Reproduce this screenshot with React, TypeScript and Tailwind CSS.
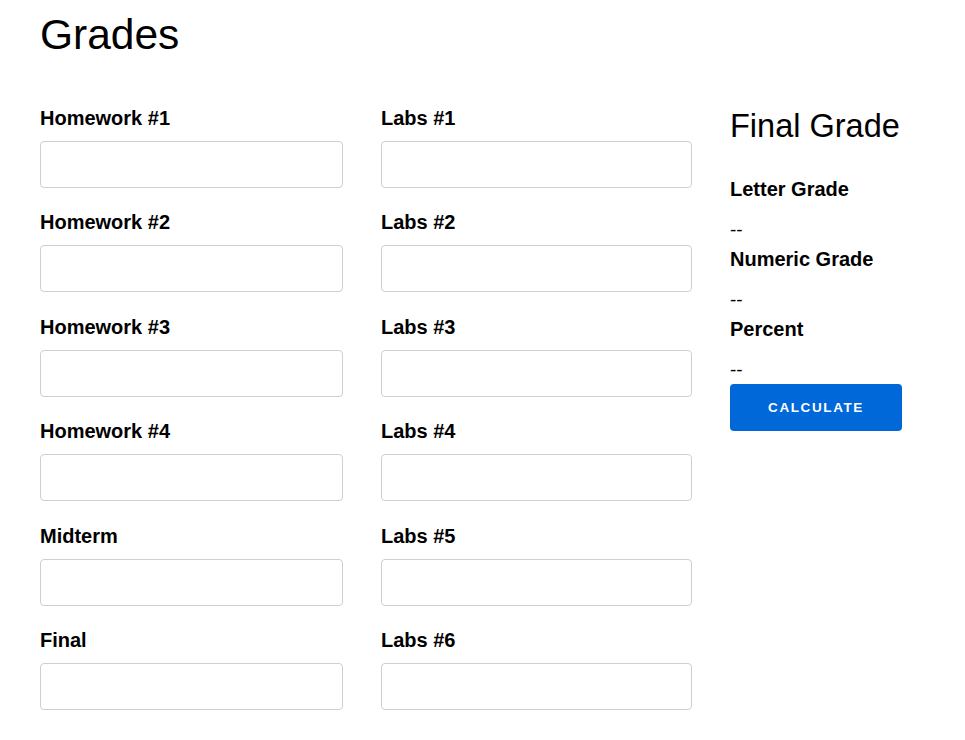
import React from 'react';

const leftFields = ['Homework #1', 'Homework #2', 'Homework #3', 'Homework #4', 'Midterm', 'Final'];
const rightFields = ['Labs #1', 'Labs #2', 'Labs #3', 'Labs #4', 'Labs #5', 'Labs #6'];

function Field({ label }: { label: string }) {
  return (
    <div className="mb-[22.4px]">
      <label className="block text-[20px] leading-[24px] font-bold text-black mb-[11px]">{label}</label>
      <input
        type="text"
        className="block w-full h-[47px] rounded-[4px] border border-[#cfcfcf] bg-white px-3 outline-none"
      />
    </div>
  );
}

export default function App() {
  const results = ['Letter Grade', 'Numeric Grade', 'Percent'];

  return (
    <div
      className="min-h-screen bg-white text-black px-[40px] pt-[10px]"
      style={{ fontFamily: '"Liberation Sans", Arial, sans-serif' }}
    >
      <h1 className="text-[42.5px] leading-[50px] font-normal">Grades</h1>

      <div className="grid grid-cols-[303px_311px_1fr] gap-x-[38px] mt-[46px]">
        {/* Homework column */}
        <div>
          {leftFields.map((f) => (
            <Field key={f} label={f} />
          ))}
        </div>

        {/* Labs column */}
        <div>
          {rightFields.map((f) => (
            <Field key={f} label={f} />
          ))}
        </div>

        {/* Final grade panel */}
        <div>
          <h2 className="text-[32.5px] leading-[40px] font-normal">Final Grade</h2>
          <div className="mt-[31px]">
            {results.map((r, i) => (
              <div key={r} className={i > 0 ? 'mt-[4px]' : ''}>
                <div className="text-[20px] leading-[24px] font-bold">{r}</div>
                <div className="mt-[15px] text-[19px] leading-[27px]">--</div>
              </div>
            ))}
          </div>
          <button
            type="button"
            className="mt-[1px] w-[172px] h-[47px] rounded-[4px] bg-[#0068d9] text-white text-[13.5px] font-bold tracking-[1.6px] pt-[1px]"
          >
            CALCULATE
          </button>
        </div>
      </div>
    </div>
  );
}
